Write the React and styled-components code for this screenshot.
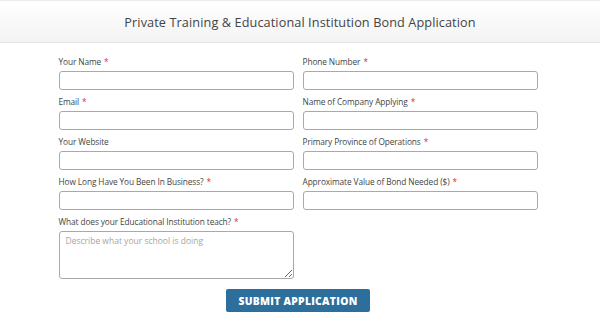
import React from 'react'
import styled, { createGlobalStyle } from 'styled-components'

const GlobalStyle = createGlobalStyle`
  html, body {
    margin: 0;
    padding: 0;
    background: #fff;
  }
  body {
    font-family: "Open Sans", "Liberation Sans", sans-serif;
  }
`

const fields = [
  { label: 'Your Name', required: true },
  { label: 'Phone Number', required: true },
  { label: 'Email', required: true },
  { label: 'Name of Company Applying', required: true },
  { label: 'Your Website', required: false },
  { label: 'Primary Province of Operations', required: true },
  { label: 'How Long Have You Been In Business?', required: true },
  { label: 'Approximate Value of Bond Needed ($)', required: true },
]

const App = () => {
  return (
    <Page>
      <GlobalStyle />
      <Header>
        <Title>Private Training &amp; Educational Institution Bond Application</Title>
      </Header>
      <Form onSubmit={e => e.preventDefault()}>
        <Grid>
          {fields.map(f => (
            <Field key={f.label}>
              <Label>
                {f.label}
                {f.required && <Star>*</Star>}
              </Label>
              <Input type="text" />
            </Field>
          ))}
          <Field>
            <Label>
              What does your Educational Institution teach?<Star>*</Star>
            </Label>
            <TextArea placeholder="Describe what your school is doing" />
          </Field>
        </Grid>
        <Actions>
          <SubmitButton type="submit">Submit Application</SubmitButton>
        </Actions>
      </Form>
    </Page>
  )
}

const Page = styled.div`
  width: 600px;
  height: 325px;
  overflow: hidden;
`

const Header = styled.div`
  height: 43px;
  display: flex;
  align-items: center;
  justify-content: center;
  background: linear-gradient(#ffffff, #f3f3f3);
  border-top: 1px solid #ececec;
  border-bottom: 1px solid #e3e3e3;
  box-sizing: border-box;
`

const Title = styled.h1`
  margin: 0;
  font-size: 12.7px;
  font-weight: 400;
  color: #444;
  letter-spacing: 0.1px;
`

const Form = styled.form`
  width: 479px;
  margin: 0 auto;
  padding-top: 14px;
  position: relative;
  left: -2px;
`

const Grid = styled.div`
  display: grid;
  grid-template-columns: 235px 235px;
  column-gap: 9px;
  row-gap: 7px;
`

const Field = styled.div`
  display: flex;
  flex-direction: column;
`

const Label = styled.label`
  font-size: 8.3px;
  color: #444;
  height: 10px;
  line-height: 10px;
  margin-bottom: 4px;
  letter-spacing: -0.1px;
`

const Star = styled.span`
  color: #e02b27;
  margin-left: 3px;
`

const Input = styled.input`
  box-sizing: border-box;
  width: 100%;
  height: 19px;
  border: 1px solid #a9a9a9;
  border-radius: 3px;
  background: #fff;
  padding: 0 6px;
  font-family: inherit;
  font-size: 9px;
`

const TextArea = styled.textarea`
  box-sizing: border-box;
  width: 100%;
  height: 48px;
  border: 1px solid #a9a9a9;
  border-radius: 3px;
  padding: 3px 6px;
  font-family: inherit;
  font-size: 8.5px;
  resize: vertical;
  display: block;
  &::placeholder {
    color: #a5a5a5;
  }
`

const Actions = styled.div`
  display: flex;
  justify-content: center;
  margin-top: 10px;
`

const SubmitButton = styled.button`
  width: 144px;
  height: 23px;
  background: #2c6e9c;
  color: #fff;
  border: none;
  border-radius: 2px;
  font-family: "Open Sans", "Liberation Sans", sans-serif;
  font-weight: 800;
  font-size: 10.3px;
  text-transform: uppercase;
  letter-spacing: 0.3px;
  cursor: pointer;
  padding: 0;
`

export default App
